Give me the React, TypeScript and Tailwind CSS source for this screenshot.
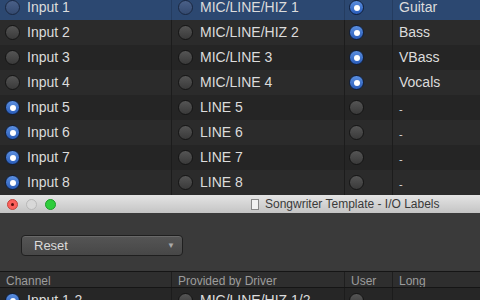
import React from "react";

type Row = { ch: string; drv: string; user: boolean; long: string; chOn: boolean };

const rows: Row[] = [
  { ch: "Input 1", drv: "MIC/LINE/HIZ 1", user: true, long: "Guitar", chOn: false },
  { ch: "Input 2", drv: "MIC/LINE/HIZ 2", user: true, long: "Bass", chOn: false },
  { ch: "Input 3", drv: "MIC/LINE 3", user: true, long: "VBass", chOn: false },
  { ch: "Input 4", drv: "MIC/LINE 4", user: true, long: "Vocals", chOn: false },
  { ch: "Input 5", drv: "LINE 5", user: false, long: "-", chOn: true },
  { ch: "Input 6", drv: "LINE 6", user: false, long: "-", chOn: true },
  { ch: "Input 7", drv: "LINE 7", user: false, long: "-", chOn: true },
  { ch: "Input 8", drv: "LINE 8", user: false, long: "-", chOn: true },
];

// mac style radio: blue ring + white dot when on, dull grey dome when off
function Radio({ on, sel }: { on: boolean; sel?: boolean }) {
  if (on) {
    return (
      <span className="flex h-[15px] w-[15px] items-center justify-center rounded-full border border-[#0f1e3a] bg-gradient-to-b from-[#5b8fe0] to-[#2a5cb8]">
        <span className="h-[6px] w-[6px] rounded-full bg-white" />
      </span>
    );
  }
  return (
    <span
      className={
        sel
          ? "h-[15px] w-[15px] rounded-full border border-[#1a2740] bg-gradient-to-b from-[#4a6088] to-[#344a70]"
          : "h-[15px] w-[15px] rounded-full border border-[#151515] bg-gradient-to-b from-[#555] to-[#3a3a3a]"
      }
    />
  );
}

const grid = "grid grid-cols-[172px_173px_48px_1fr]";

export default function App() {
  return (
    <div
      className="flex h-[300px] w-[480px] flex-col overflow-hidden bg-[#262626] text-[14px] text-[#dcdcdc]"
      style={{ fontFamily: '"Liberation Sans", Arial, sans-serif' }}
    >
      <div className="mt-[-5px] flex flex-col">
        {rows.map((r, i) => {
          const sel = i === 0;
          const bg = sel ? "bg-[#2c4871]" : i % 2 === 1 ? "bg-[#2b2b2b]" : "bg-[#252525]";
          const sep = sel ? "border-[#243c60]" : "border-[#1c1c1c]";
          return (
            <div key={r.ch} className={`${grid} h-[25px] ${bg}`}>
              <div className={`flex items-center gap-[7px] border-r pl-[5px] ${sep}`}>
                <Radio on={r.chOn} sel={sel} />
                <span>{r.ch}</span>
              </div>
              <div className={`flex items-center gap-[7px] border-r pl-[6px] ${sep}`}>
                <Radio on={false} sel={sel} />
                <span>{r.drv}</span>
              </div>
              <div className={`flex items-center border-r pl-[4px] ${sep}`}>
                <Radio on={r.user} sel={sel} />
              </div>
              <div className="flex items-center pl-[6px]">
                {r.long === "-" ? <span className="mt-[3px] text-[11px]">-</span> : <span>{r.long}</span>}
              </div>
            </div>
          );
        })}
      </div>
      <div className="h-px bg-[#0e0e0e]" />

      {/* window title bar */}
      <div className="flex h-[18px] items-center bg-gradient-to-b from-[#e4e4e4] to-[#c4c4c4] px-[7px]">
        <div className="flex gap-[8px]">
          <span className="flex h-[11px] w-[11px] items-center justify-center rounded-full border border-[#c2453e] bg-[#fc615c]">
            <span className="h-[3px] w-[3px] rounded-full bg-[#5a0f0c]" />
          </span>
          <span className="h-[11px] w-[11px] rounded-full border border-[#b8b8b8] bg-[#d8d8d8]" />
          <span className="h-[11px] w-[11px] rounded-full border border-[#1e9c2a] bg-[#2fcd3c]" />
        </div>
        <div className="ml-[195px] flex items-center gap-[6px] text-[12px] text-[#3a3a3a]">
          <span className="h-[11px] w-[8px] border border-[#888] bg-[#f2f2f2]" />
          <span>Songwriter Template - I/O Labels</span>
        </div>
      </div>

      {/* window body */}
      <div className="flex flex-1 flex-col bg-[#3a3a3a]">
        <div className="px-[21px] pt-[22px] pb-[15px]">
          <div className="flex h-[21px] w-[162px] items-center justify-between rounded-[4px] border border-[#1f1f1f] bg-gradient-to-b from-[#555] to-[#474747] pl-[12px] pr-[7px] text-[13px] text-[#dadada] shadow-[inset_0_1px_0_rgba(255,255,255,0.12)]">
            <span>Reset</span>
            <span className="text-[8px] text-[#aaa]">▼</span>
          </div>
        </div>
        <div className="h-px bg-[#151515]" />
        <div className={`${grid} h-[15px] bg-[#2e2e2e] text-[12px] text-[#9c9c9c]`}>
          <div className="flex items-center border-r border-[#1e1e1e] pl-[6px]">Channel</div>
          <div className="flex items-center border-r border-[#1e1e1e] pl-[6px]">Provided by Driver</div>
          <div className="flex items-center border-r border-[#1e1e1e] pl-[6px]">User</div>
          <div className="flex items-center pl-[6px]">Long</div>
        </div>
        <div className="h-px bg-[#151515]" />
        <div className={`${grid} h-[25px] bg-[#262626]`}>
          <div className="flex items-center gap-[7px] border-r border-[#1c1c1c] pl-[5px]">
            <Radio on={true} />
            <span>Input 1-2</span>
          </div>
          <div className="flex items-center gap-[7px] border-r border-[#1c1c1c] pl-[6px]">
            <Radio on={false} />
            <span>MIC/LINE/HIZ 1/2</span>
          </div>
          <div className="flex items-center border-r border-[#1c1c1c] pl-[4px]">
            <Radio on={false} />
          </div>
          <div />
        </div>
      </div>
    </div>
  );
}
